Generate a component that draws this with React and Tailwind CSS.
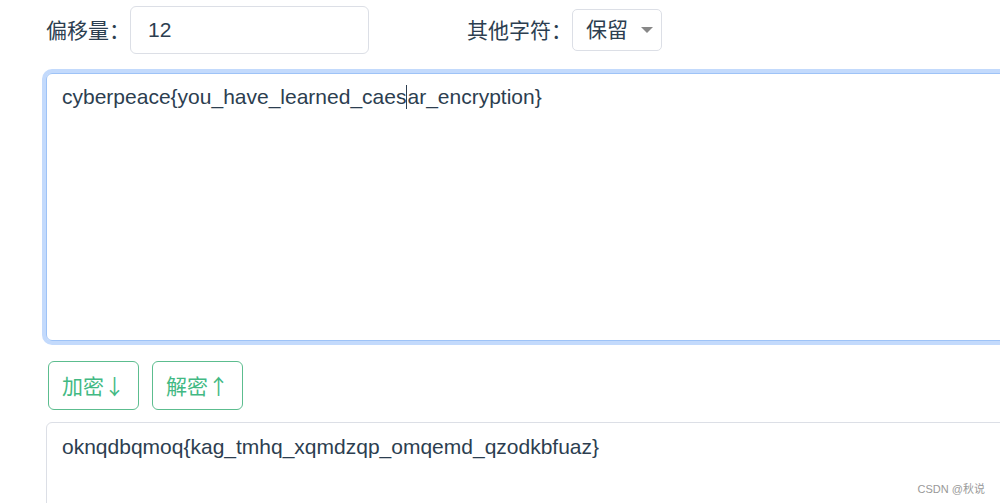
import React from "react";

const font = { fontFamily: '"Liberation Sans", Arial, "Noto Sans CJK SC", sans-serif' };
const cjk = { fontFamily: '"Noto Sans CJK SC", "Liberation Sans", sans-serif' };

function App() {
  return (
    <div
      className="w-[1000px] h-[503px] overflow-hidden bg-white text-[#2c3e50] relative"
      style={font}
    >
      <div className="flex items-center h-[48px] mt-[6px]">
        <span className="ml-[46px] text-[21px] leading-none">偏移量：</span>
        <div className="w-[239px] h-[48px] border border-[#dcdfe6] rounded-[6px] flex items-center pl-[17px] text-[21px]">
          12
        </div>
        <span className="ml-[98px] text-[21px] leading-none">其他字符：</span>
        <div className="w-[90px] h-[42px] border border-[#dcdfe6] rounded-[5px] flex items-center pl-[13px] text-[21px]">
          保留
          <span className="ml-[13px] w-0 h-0 border-l-[6px] border-r-[6px] border-t-[6px] border-l-transparent border-r-transparent border-t-[#888]"></span>
        </div>
      </div>

      <div className="ml-[46px] mt-[19px] w-[1000px] h-[268px] border border-[#9ec3f7] rounded-[6px] shadow-[0_0_0_4px_#c3dafc] px-[15px] pt-[7px] text-[21px]">
        cyberpeace{"{"}you_have_learned_caes
        <span className="inline-block w-px h-[24px] bg-[#2c3e50] align-[-5px]"></span>
        ar_encryption{"}"}
      </div>

      <div className="flex gap-[13px] ml-[48px] mt-[20px]">
        <button
          className="w-[91px] h-[49px] border border-[#5cbd8f] rounded-[6px] text-[#42b983] text-[21px] flex items-center justify-center"
          style={cjk}
        >
          加密↓
        </button>
        <button
          className="w-[91px] h-[49px] border border-[#5cbd8f] rounded-[6px] text-[#42b983] text-[21px] flex items-center justify-center"
          style={cjk}
        >
          解密↑
        </button>
      </div>

      <div className="ml-[46px] mt-[12px] w-[1000px] h-[120px] border border-[#dcdfe6] rounded-[6px] px-[15px] pt-[8px] text-[21px]">
        oknqdbqmoq{"{"}kag_tmhq_xqmdzqp_omqemd_qzodkbfuaz{"}"}
      </div>

      <span className="absolute right-[15px] bottom-[6px] text-[11px] text-[#999]">CSDN @秋说</span>
    </div>
  );
}

export default App;
